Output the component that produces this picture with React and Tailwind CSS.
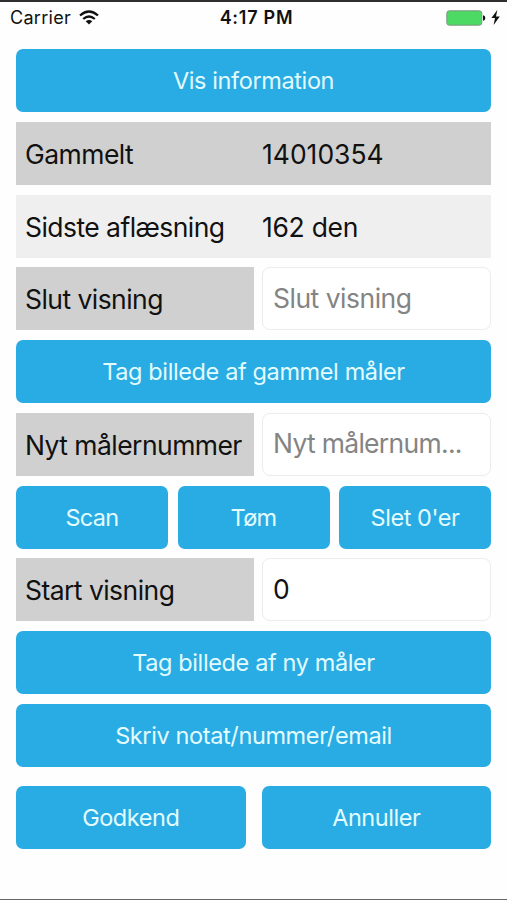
const Button = ({ children, text = "tracking-[-0.38px]" }) => (
  <button className="flex h-[63px] min-w-0 flex-1 items-center justify-center rounded-[7px] bg-[#29abe3] pt-px text-[23.5px] font-normal whitespace-nowrap text-[#e3fcff]">
    <span className={text}>{children}</span>
  </button>
);

const Label = ({ children, text = "tracking-[-0.55px]" }) => (
  <div className="flex h-[63px] w-[238px] shrink-0 items-center bg-[#d0d0d0] pt-[3px] pl-[9px] text-[26.5px] whitespace-nowrap text-[#111]">
    <span className={text}>{children}</span>
  </div>
);

const Field = ({ children, text = "" }) => (
  <div className="flex h-[63px] min-w-0 flex-1 items-center rounded-[8px] border border-[#ececec] bg-white pl-[10px] text-[26.5px] whitespace-nowrap">
    <span className={text}>{children}</span>
  </div>
);

const InfoRow = ({ label, value, bg, valueText = "" }) => (
  <div className={`flex h-[63px] items-center pt-[3px] pl-[9px] text-[26.5px] whitespace-nowrap text-[#111] ${bg}`}>
    <span className="w-[237px] tracking-[-0.55px]">{label}</span>
    <span className={valueText}>{value}</span>
  </div>
);

export default function App() {
  return (
    <div className="flex h-[900px] w-[507px] flex-col overflow-hidden border-t-2 border-b border-t-[#302e30] border-b-[#666] bg-[#fefefe] font-['Inter','Liberation_Sans',sans-serif]">
      <header className="grid h-[32px] shrink-0 grid-cols-3 items-center pr-[7px] pl-[10px] text-[18px] leading-none text-[#111]">
        <div className="flex items-center gap-[8px]">
          <span className="tracking-[0.3px]">Carrier</span>
          <svg width="20" height="15" viewBox="0 0 20 15" className="-mt-[2px]" fill="none" stroke="#111" strokeWidth="2.3">
            <path d="M1 5.5Q10-2.5 19 5.5" />
            <path d="M4.2 9Q10 4 15.8 9" />
            <path d="M10 14.5L6.7 11.2Q10 8.8 13.3 11.2Z" fill="#111" stroke="none" />
          </svg>
        </div>
        <div className="pl-[3px] text-center font-semibold tracking-[0.75px] whitespace-nowrap">4:17 PM</div>
        <div className="flex items-center justify-end gap-[5px]">
          <svg width="40" height="16" viewBox="0 0 40 16">
            <rect x="0.8" y="0.8" width="35" height="14.4" rx="2.5" fill="#4cd964" stroke="#7c9980" strokeWidth="1" />
            <path d="M37 5.3Q39.3 5.5 39.3 8T37 10.7Z" fill="#111" />
          </svg>
          <svg width="9" height="15" viewBox="0 0 9 15" className="-mt-px">
            <path d="M6.3 0L.4 8H4L2.6 15L8.8 6.4H5Z" fill="#111" />
          </svg>
        </div>
      </header>

      <main className="flex flex-col gap-[9.75px] px-[16px] pt-[15px]">
        <div className="flex">
          <Button>Vis information</Button>
        </div>
        <InfoRow label="Gammelt" value="14010354" bg="bg-[#d0d0d0]" />
        <InfoRow label="Sidste aflæsning" value="162 den" bg="bg-[#efefef]" valueText="tracking-[-0.3px]" />
        <div className="flex gap-[8px]">
          <Label>Slut visning</Label>
          <Field text="text-[#848484] tracking-[-0.5px]">Slut visning</Field>
        </div>
        <div className="flex">
          <Button>Tag billede af gammel måler</Button>
        </div>
        <div className="flex gap-[8px]">
          <Label>Nyt målernummer</Label>
          <Field text="text-[#848484] tracking-[-0.7px]">Nyt målernum...</Field>
        </div>
        <div className="flex gap-[9.5px]">
          <Button text="tracking-[-0.7px]">Scan</Button>
          <Button text="tracking-[-0.7px]">Tøm</Button>
          <Button text="tracking-[-0.45px]">Slet 0'er</Button>
        </div>
        <div className="flex gap-[8px]">
          <Label>Start visning</Label>
          <Field text="text-[#111]">0</Field>
        </div>
        <div className="flex">
          <Button>Tag billede af ny måler</Button>
        </div>
        <div className="flex">
          <Button>Skriv notat/nummer/email</Button>
        </div>
        <div className="mt-[9.5px] flex gap-[16px]">
          <Button text="tracking-[-0.45px]">Godkend</Button>
          <Button text="tracking-[-0.45px]">Annuller</Button>
        </div>
      </main>
    </div>
  );
}
